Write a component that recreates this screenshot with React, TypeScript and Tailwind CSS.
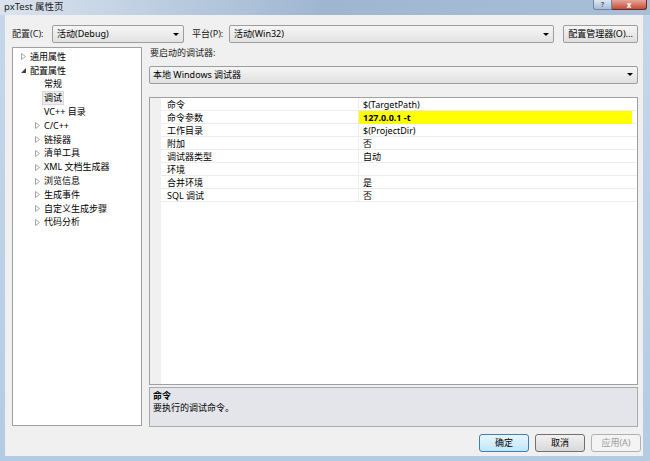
import React from "react";

const font = { fontFamily: '"Noto Sans", "Noto Sans CJK SC", sans-serif' };

function DownArrow() {
  return (
    <svg width="6" height="3" viewBox="0 0 6 3" className="shrink-0">
      <path d="M0 0 L6 0 L3 3 Z" fill="#000" />
    </svg>
  );
}

function Collapsed() {
  return (
    <svg width="5" height="7" viewBox="0 0 5 7" className="shrink-0">
      <path d="M0.5 0.5 L4.5 3.5 L0.5 6.5 Z" fill="none" stroke="#a6a6a6" strokeWidth="1" />
    </svg>
  );
}

function Expanded() {
  return (
    <svg width="5" height="5" viewBox="0 0 5 5" className="shrink-0">
      <path d="M5 0 L5 5 L0 5 Z" fill="#404040" />
    </svg>
  );
}

type TreeItem = { label: string; indent: number; arrow?: "c" | "e"; selected?: boolean };

const tree: TreeItem[] = [
  { label: "通用属性", indent: 0, arrow: "c" },
  { label: "配置属性", indent: 0, arrow: "e" },
  { label: "常规", indent: 1 },
  { label: "调试", indent: 1, selected: true },
  { label: "VC++ 目录", indent: 1 },
  { label: "C/C++", indent: 1, arrow: "c" },
  { label: "链接器", indent: 1, arrow: "c" },
  { label: "清单工具", indent: 1, arrow: "c" },
  { label: "XML 文档生成器", indent: 1, arrow: "c" },
  { label: "浏览信息", indent: 1, arrow: "c" },
  { label: "生成事件", indent: 1, arrow: "c" },
  { label: "自定义生成步骤", indent: 1, arrow: "c" },
  { label: "代码分析", indent: 1, arrow: "c" },
];

const props: { name: string; value: string; highlight?: boolean }[] = [
  { name: "命令", value: "$(TargetPath)" },
  { name: "命令参数", value: "127.0.0.1 -t", highlight: true },
  { name: "工作目录", value: "$(ProjectDir)" },
  { name: "附加", value: "否" },
  { name: "调试器类型", value: "自动" },
  { name: "环境", value: "" },
  { name: "合并环境", value: "是" },
  { name: "SQL 调试", value: "否" },
];

export default function App() {
  return (
    <div
      className="w-[650px] h-[461px] flex flex-col bg-gradient-to-b from-[#c6d7ea] to-[#b4cbe4] text-[9px] text-black overflow-hidden"
      style={font}
    >
      {/* title bar */}
      <div className="h-[15px] flex items-start bg-gradient-to-r from-[#dbe4ee] via-[#9fb6d1] to-[#a9bfd8]">
        <span className="pl-[4px] pt-[1px] leading-[12px] text-[9.5px] text-[#1a1a1a]">pxTest 属性页</span>
        <div className="ml-auto flex mr-[3px]">
          <div className="w-[19px] h-[10px] rounded-bl-[3px] border border-t-0 border-[#6f86a3] bg-gradient-to-b from-[#dfe8f2] to-[#a9bdd4] flex items-center justify-center text-[7px] leading-[8px] text-[#4a5d78] font-bold">?</div>
          <div className="w-[35px] h-[10px] rounded-br-[3px] border border-t-0 border-l-0 border-[#6b2a2a] bg-gradient-to-b from-[#e5a799] to-[#c6483a] flex items-center justify-center text-[8px] leading-[8px] text-white font-bold">x</div>
        </div>
      </div>

      {/* client */}
      <div className="ml-[5px] mr-[7px] h-[441px] bg-[#f0f0f0] flex flex-col pl-[7px] pr-[5px] pt-[10px]">
        {/* config row */}
        <div className="h-[18px] flex items-center">
          <span className="w-[40px] text-[#1a1a1a]">配置(C):</span>
          <div className="w-[132px] h-[18px] border border-[#9d9d9d] rounded-[2px] bg-gradient-to-b from-[#f6f6f6] to-[#e2e2e2] flex items-center pl-[4px] pr-[4px]">
            <span className="flex-1">活动(Debug)</span>
            <DownArrow />
          </div>
          <span className="ml-[8px] w-[37px] text-[#1a1a1a]">平台(P):</span>
          <div className="w-[325px] h-[18px] border border-[#9d9d9d] rounded-[2px] bg-gradient-to-b from-[#f6f6f6] to-[#e2e2e2] flex items-center pl-[4px] pr-[4px]">
            <span className="flex-1">活动(Win32)</span>
            <DownArrow />
          </div>
          <div className="ml-[9px] w-[75px] h-[18px] border border-[#9d9d9d] rounded-[2px] bg-gradient-to-b from-[#f6f6f6] to-[#dedede] flex items-center justify-center">
            配置管理器(O)...
          </div>
        </div>

        {/* main */}
        <div className="mt-[4px] flex h-[380px]">
          {/* tree */}
          <div className="w-[130px] h-[379px] border border-[#a0a0a0] bg-white pt-[2px]">
            {tree.map((t) => (
              <div key={t.label} className="h-[13.8px] flex items-center" style={{ paddingLeft: t.indent ? 22 : 8 }}>
                <div className="w-[9px] flex items-center">
                  {t.arrow === "c" && <Collapsed />}
                  {t.arrow === "e" && <Expanded />}
                </div>
                {t.selected ? (
                  <span className="px-[1px] leading-[12px] bg-[#ececec] border border-[#dadada] -ml-[2px]">{t.label}</span>
                ) : (
                  <span className="leading-[12px]">{t.label}</span>
                )}
              </div>
            ))}
          </div>

          {/* right */}
          <div className="ml-[7px] flex-1 flex flex-col">
            <div className="h-[19px] pl-[1px] leading-[12px] text-[#1a1a1a]">要启动的调试器:</div>
            <div className="h-[18px] border border-[#9d9d9d] rounded-[2px] bg-gradient-to-b from-[#f6f6f6] to-[#e0e0e0] flex items-center pl-[3px] pr-[4px]">
              <span className="flex-1 leading-[12px]">本地 Windows 调试器</span>
              <DownArrow />
            </div>
            <div className="mt-[13px] h-[289px] border border-[#a0a0a0] bg-white flex">
              <div className="w-[11px] bg-[#f0f0f0]" />
              <div className="flex-1 flex flex-col">
                {props.map((p) => (
                  <div key={p.name} className="h-[13px] flex border-b border-[#ececec]">
                    <div className="w-[198px] pl-[6px] pt-[1px] leading-[12px] border-r border-[#ececec]">{p.name}</div>
                    <div className="flex-1 pr-[5px]">
                      <div className={"h-[12px] pt-[1px] leading-[12px] pl-[4px] " + (p.highlight ? "bg-[#ffff00] font-bold h-[13px]" : "")}>{p.value}</div>
                    </div>
                  </div>
                ))}
              </div>
            </div>
            <div className="mt-[2px] h-[40px] border border-[#a7abb0] bg-[#e3e5ea] pl-[3px] pt-[2px]">
              <div className="font-bold leading-[12px]">命令</div>
              <div className="leading-[12px]">要执行的调试命令。</div>
            </div>
          </div>
        </div>

        {/* buttons */}
        <div className="mt-[7px] flex justify-end gap-[6px] -mr-[3px]">
          <div className="w-[50px] h-[18px] border border-[#3c7fb1] rounded-[3px] bg-gradient-to-b from-[#eaf6fd] to-[#bee6fd] flex items-center justify-center">确定</div>
          <div className="w-[50px] h-[18px] border border-[#707070] rounded-[3px] bg-gradient-to-b from-[#f2f2f2] to-[#d8d8d8] flex items-center justify-center">取消</div>
          <div className="w-[50px] h-[18px] border border-[#adb2b5] rounded-[3px] bg-[#f4f4f4] flex items-center justify-center text-[#9a9a9a]">应用(A)</div>
        </div>
      </div>
    </div>
  );
}
